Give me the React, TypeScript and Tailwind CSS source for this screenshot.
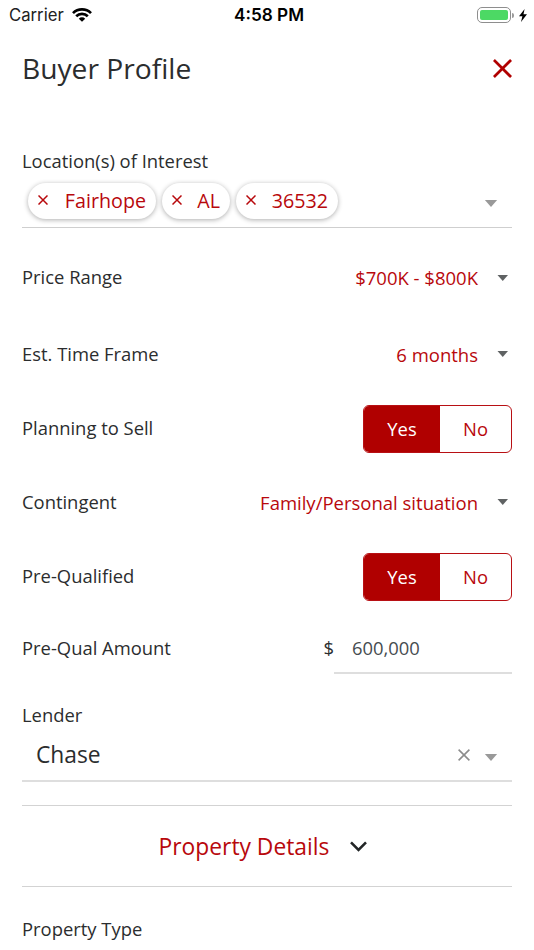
import { ReactNode } from "react";

interface ChipProps {
  label: string;
  className: string;
}

function Cross({ className }: { className: string }) {
  return (
    <svg viewBox="0 0 10 10" fill="none" stroke="currentColor" className={className}>
      <path d="M.5.5l9 9M9.5.5l-9 9" />
    </svg>
  );
}

function Caret({ className }: { className: string }) {
  return (
    <svg viewBox="0 0 14 8" fill="currentColor" className={className}>
      <path d="M0 0h14L7 8z" />
    </svg>
  );
}

function Chip({ label, className }: ChipProps) {
  return (
    <div
      className={`flex h-9 items-center justify-between rounded-full bg-white pr-[10px] pl-[10px] text-[19.7px] text-[#b8080c] shadow-[0_1px_5px_rgba(0,0,0,0.32)] ${className}`}
    >
      <Cross className="-mt-[3px] h-[10px] w-[10px] stroke-[1.5]" />
      <span>{label}</span>
    </div>
  );
}

function Row({ label, className, children }: { label: string; className: string; children: ReactNode }) {
  return (
    <div className={`flex items-center justify-between ${className}`}>
      <span className="-mt-0.5">{label}</span>
      {children}
    </div>
  );
}

function Select({ value }: { value: string }) {
  return (
    <div className="flex items-center pr-[3.5px] text-[18.5px] text-[#b8080c]">
      <span>{value}</span>
      <Caret className="-mt-px ml-[19px] h-1.5 w-[11.5px] text-[#5f6263]" />
    </div>
  );
}

function YesNo() {
  return (
    <div className="flex h-12 w-[149px] overflow-hidden rounded-[6px] border-[1.5px] border-[#b81014]">
      <button className="w-[76px] bg-[#b00000] text-white">Yes</button>
      <button className="flex-1 text-[#b8080c]">No</button>
    </div>
  );
}

function StatusBar() {
  return (
    <div className="grid h-[30px] grid-cols-3 items-center pr-[7px] pl-[9px] font-['Inter'] text-[17px] text-black">
      <div className="flex items-center gap-2">
        <span className="text-[16.7px] text-[#222]">Carrier</span>
        <svg viewBox="0 0 20 14" className="h-[14px] w-5" fill="none" stroke="currentColor" strokeWidth="2.7">
          <path d="M1 5.1a12.8 12.8 0 0 1 18 0M4.2 8.3a8.2 8.2 0 0 1 11.6 0" />
          <path d="M10 13.8L6.8 10.7a4.5 4.5 0 0 1 6.4 0z" fill="currentColor" stroke="none" />
        </svg>
      </div>
      <span className="pl-0.5 text-center text-[17.2px] font-semibold">4:58 PM</span>
      <div className="flex items-center justify-end">
        <div className="h-4 w-[34px] rounded-[5px] border border-[#8e8e8e] p-[2px]">
          <div className="h-full rounded-[2px] bg-[#4cd964]" />
        </div>
        <div className="ml-px h-[5px] w-[2px] rounded-r-full bg-[#9a9a9a]" />
        <svg viewBox="0 0 8 13" className="ml-[5px] h-[13px] w-2" fill="currentColor">
          <path d="M5.6 0L0 7.3h3.4L2 13l6-7.7H4.5z" />
        </svg>
      </div>
    </div>
  );
}

export default function App() {
  return (
    <div className="h-[950px] w-[534px] overflow-hidden bg-white font-['Open_Sans',sans-serif] text-[18.4px] leading-6 text-[#2b2d2e]">
      <StatusBar />

      <main className="px-[22px]">
        <header className="flex h-[76px] items-center justify-between">
          <h1 className="text-[28.2px] leading-9">Buyer Profile</h1>
          <Cross className="h-[19px] w-[19px] text-[#b00000] stroke-[1.4]" />
        </header>

        <section className="pt-[43px]">
          <div>Location(s) of Interest</div>
          <div className="flex h-[55px] items-center border-b border-[#cfcfcf] pt-0.5 pl-1.5">
            <Chip label="Fairhope" className="w-32" />
            <Chip label="AL" className="ml-[6px] w-[68px]" />
            <Chip label="36532" className="ml-[6px] w-[102px]" />
            <Caret className="mt-[5px] mr-[14px] ml-auto h-[7px] w-[14px] text-[#999]" />
          </div>
        </section>

        <Row label="Price Range" className="mt-3 h-[76px]">
          <Select value="$700K - $800K" />
        </Row>
        <Row label="Est. Time Frame" className="h-[77px]">
          <Select value="6 months" />
        </Row>
        <Row label="Planning to Sell" className="h-[72px]">
          <YesNo />
        </Row>
        <Row label="Contingent" className="h-[75px]">
          <Select value="Family/Personal situation" />
        </Row>
        <Row label="Pre-Qualified" className="h-[74px]">
          <YesNo />
        </Row>
        <Row label="Pre-Qual Amount" className="h-[70px]">
          <div className="-mt-0.5 flex">
            <span>$</span>
            <div className="-mb-[14px] w-[178px] border-b-2 border-[#dedede] pb-3 pl-[18px] text-[#464c50]">
              600,000
            </div>
          </div>
        </Row>

        <section className="pt-[19px]">
          <div>Lender</div>
          <div className="flex h-[55px] items-center border-b-2 border-[#dedede] pt-[3px] pr-[14px] pl-[14px]">
            <span className="text-[22.8px]">Chase</span>
            <Cross className="ml-auto h-3 w-3 text-[#8c8c8c] stroke-[1.3]" />
            <Caret className="mt-1 ml-[14px] h-[7px] w-[14px] text-[#999]" />
          </div>
        </section>

        <button className="mt-[23px] flex h-[82px] w-full items-center justify-center border-y border-[#d3d3d3] pr-2 text-[22.8px] text-[#b8080c]">
          <span className="mt-px">Property Details</span>
          <svg viewBox="0 0 17 11" className="ml-[21px] h-[11px] w-[17px]" fill="none" stroke="#222526" strokeWidth="2.6">
            <path d="M1 1.3l7.5 7.5L16 1.3" />
          </svg>
        </button>

        <div className="pt-[30px]">Property Type</div>
      </main>
    </div>
  );
}
